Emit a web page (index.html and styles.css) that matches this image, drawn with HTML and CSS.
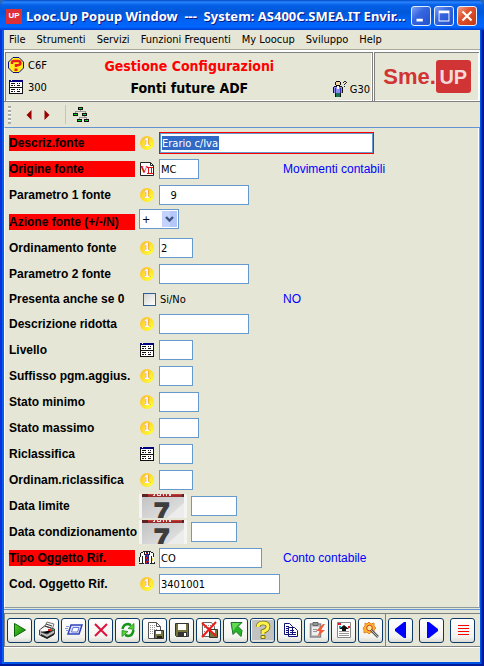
FILE: index.html
```html
<!DOCTYPE html>
<html lang="it">
<head>
<meta charset="utf-8">
<meta name="viewport" content="width=device-width, initial-scale=1">
<title>Looc.Up Popup Window</title>
<link rel="stylesheet" href="styles.css">
</head>
<body>
<svg class="sprite" aria-hidden="true">
  <defs>
    <linearGradient id="page" x1="0" y1="0" x2="1" y2="1"><stop offset="0" stop-color="#c2c2c2"/><stop offset="1" stop-color="#e6e6e6"/></linearGradient>
    <linearGradient id="leaf" x1="0" y1="0" x2="1" y2="1"><stop offset="0" stop-color="#5ccf2c"/><stop offset="1" stop-color="#067d06"/></linearGradient>
  </defs>
  <symbol id="table" viewBox="0 0 14 14">
    <g shape-rendering="crispEdges">
      <path fill="#111" d="M0 0h14v14H0z"/><path fill="#fff" d="M1 2h12v5H1zM1 8h12v5H1z"/><path fill="#000080" d="M0 0h14v2H0z"/><path fill="#fff" d="M2 0h1v1H2z"/>
      <path fill="#111" d="M2 3h4v1H2zM8 3h1v1H8zM10 3h1v1h-1zM2 5h2v1H2zM5 5h1v1H5zM8 5h3v1H8zM2 9h4v1H2zM8 9h1v1H8zM10 9h1v1h-1zM2 11h2v1H2zM5 11h1v1H5zM8 11h3v1H8z"/>
    </g>
  </symbol>
  <symbol id="calendar" viewBox="0 0 48 24">
    <path fill="#f4f4f2" d="M0 0h48v24H0z"/><path fill="url(#page)" d="M3 1h42v23H3z"/>
    <path fill="#ececec" d="M45 9v15H28z"/><path fill="#9c2b2b" d="M3 0h42v3H3z"/><path fill="#c53c3a" d="M8 0h35v1H8z"/><path fill="#5d2222" d="M3 0h6v3H3zM43 0h2v3h-2z"/>
    <path fill="#f1dddd" d="M15 0h1v2h-2V1h1zM18 0h1v1h2V0h1v2h-4zM24 0h1v2h-1zM27 0h1v2h-1zM30 0h2v2h-2z"/>
  </symbol>
</svg>

<div class="window">
  <header class="titlebar">
    <span class="app-badge">UP</span>
    <h1 class="titlebar-text">Looc.Up Popup Window&nbsp; ---&nbsp; System: AS400C.SMEA.IT Envir...</h1>
    <button class="caption-button" type="button" aria-label="Minimize"><svg viewBox="0 0 20 20"><path fill="#fff" d="M5 13h7v3H5z"/></svg></button>
    <button class="caption-button" type="button" aria-label="Maximize"><svg viewBox="0 0 20 20"><path fill="#fff" fill-rule="evenodd" d="M4 4h12v12H4zM5 7v8h10V7z"/></svg></button>
    <button class="caption-button caption-button--close" type="button" aria-label="Close"><svg viewBox="0 0 20 20"><path stroke="#fff" stroke-width="2.4" d="M5 5l10 10M15 5L5 15"/></svg></button>
  </header>

  <div class="client">
    <nav class="menu" aria-label="Menu">
      <button type="button">File</button><button type="button">Strumenti</button><button type="button">Servizi</button><button type="button">Funzioni Frequenti</button><button type="button">My Loocup</button><button type="button">Sviluppo</button><button type="button">Help</button>
    </nav>

    <section class="banner">
      <div class="banner-main">
        <div class="codes">
          <span class="code"><svg class="icon16" viewBox="0 0 16 16"><path fill="#ffec20" stroke="#10107a" d="M5 .5h6l4.5 4.5v6L11 15.500H5L.5 11V5z"/><path fill="none" stroke="#ef1c1c" stroke-width="2.4" d="M4 7V5.500Q4 4 6 4h4q2.500 0 2.500 2T9.500 8.300H8V10"/><path fill="#ef1c1c" d="M6.500 11.500h3V14h-3z"/></svg>C6F</span>
          <span class="code"><svg class="icon14"><use href="#table"/></svg>300</span>
        </div>
        <div class="headings">
          <h2 class="heading heading--red">Gestione Configurazioni</h2>
          <h2 class="heading">Fonti future ADF</h2>
        </div>
        <span class="code code--user"><svg class="icon16" viewBox="0 0 16 16" shape-rendering="crispEdges"><path fill="#111" d="M4 0h4v1H4zM3 1h1v3H3zM8 1h1v3H8zM4 4h4v1H4zM2 5h8v1H2zM1 6h1v6H1zM10 6h1v6h-1zM3 12h6v4H3z"/><path fill="#f7d3a0" d="M4 1h4v3H4z"/><path fill="#8d8df0" d="M2 6h8v6H2z"/><path fill="#3030a0" d="M3 7h1v5H3zM8 7h1v5H8z"/><path fill="#fff" d="M5 5h2v3H5z"/><path fill="#167052" d="M4 12h4v4H4z"/><path fill="#222" d="M12 0h2v1h-2zM11 1h1v1h-1zM14 1h1v1h-1zM13 2h1v1h-1zM12 3h1v1h-1zM12 5h1v1h-1z"/></svg>G30</span>
      </div>
      <div class="banner-logo"><span class="logo-sme">Sme.</span><span class="logo-up">UP</span></div>
    </section>

    <div class="navbar">
      <span class="grip"></span>
      <button type="button" aria-label="Precedente"><svg class="arrow" viewBox="0 0 6 10"><path fill="#990000" d="M5.500 0v10L.5 5z"/></svg></button>
      <button type="button" aria-label="Successivo"><svg class="arrow" viewBox="0 0 6 10"><path fill="#990000" d="M.5 0v10l5-5z"/></svg></button>
      <span class="divider"></span>
      <button type="button" aria-label="Struttura"><svg class="icon16" viewBox="0 0 16 16" shape-rendering="crispEdges"><path fill="#999" d="M7 3h1v2H7zM2 4h11v1H2zM2 4h1v3H2zM12 4h1v3h-1zM11 9h1v2h-1zM6 10h8v1H6zM6 10h1v3H6zM13 10h1v3h-1z"/><path fill="#111" d="M5 0h5v3H5zM0 6h5v3H0zM9 6h5v3H9zM4 12h5v3H4zM11 12h5v3h-5z"/><path fill="#00e020" d="M6 1h3v1H6zM1 7h3v1H1zM10 7h3v1h-3zM5 13h3v1H5zM12 13h3v1h-3z"/></svg></button>
    </div>

    <form class="fields">
      <div class="row"><label class="label label--required" for="f1">Descriz.fonte</label><span class="coin" aria-hidden="true">1</span><span class="focus-frame"><input id="f1" class="w-full" value="Erario c/Iva"></span></div>
      <div class="row"><label class="label label--required" for="f2">Origine fonte</label><svg class="icon-field" viewBox="0 0 14 14"><path fill="#fff" stroke="#222" d="M.5.5h10l3 3v10H.5z"/><path fill="none" stroke="#222" d="M10.500.5v3h3"/><text x="0" y="11" font-family="Liberation Serif" font-size="11" font-weight="bold" fill="#e01010">V</text><path fill="#e01010" d="M7 5h6v1H7zM8 6h1v5H8zM11 6h1v5h-1zM7 11h6v1H7z"/></svg><input id="f2" class="w-m" value="MC"><output class="hint">Movimenti contabili</output></div>
      <div class="row"><label class="label" for="f3">Parametro 1 fonte</label><span class="coin" aria-hidden="true">1</span><input id="f3" class="w-l" value="&nbsp;&nbsp; 9"></div>
      <div class="row row--select"><label class="label label--required" for="f4">Azione fonte (+/-/N)</label><span class="select"><select id="f4"><option>+</option><option>-</option><option>N</option></select><svg class="chevron" viewBox="0 0 15 16"><path fill="#c3d3fd" d="M0 0h15v16H0z"/><path fill="#b4c7f8" d="M8 0h7v16H8z"/><path fill="none" stroke="#3d5680" stroke-width="2.400" d="M4 6l3.500 3.500L11 6"/></svg></span></div>
      <div class="row"><label class="label" for="f5">Ordinamento fonte</label><span class="coin" aria-hidden="true">1</span><input id="f5" class="w-s" value="2"></div>
      <div class="row"><label class="label" for="f6">Parametro 2 fonte</label><span class="coin" aria-hidden="true">1</span><input id="f6" class="w-l"></div>
      <div class="row row--check"><span class="label">Presenta anche se 0</span><label class="check"><input type="checkbox">Si/No</label><output class="hint">NO</output></div>
      <div class="row"><label class="label" for="f8">Descrizione ridotta</label><span class="coin" aria-hidden="true">1</span><input id="f8" class="w-l"></div>
      <div class="row"><label class="label" for="f9">Livello</label><svg class="icon-field"><use href="#table"/></svg><input id="f9" class="w-s"></div>
      <div class="row"><label class="label" for="f10">Suffisso pgm.aggius.</label><span class="coin" aria-hidden="true">1</span><input id="f10" class="w-s"></div>
      <div class="row"><label class="label" for="f11">Stato minimo</label><span class="coin" aria-hidden="true">1</span><input id="f11" class="w-m"></div>
      <div class="row"><label class="label" for="f12">Stato massimo</label><span class="coin" aria-hidden="true">1</span><input id="f12" class="w-m"></div>
      <div class="row"><label class="label" for="f13">Riclassifica</label><svg class="icon-field"><use href="#table"/></svg><input id="f13" class="w-s"></div>
      <div class="row"><label class="label" for="f14">Ordinam.riclassifica</label><span class="coin" aria-hidden="true">1</span><input id="f14" class="w-s"></div>
      <div class="row"><label class="label" for="f15">Data limite</label><span class="date"><svg class="calendar" viewBox="0 0 48 24"><use href="#calendar"/><text x="15" y="28" font-family="Liberation Sans" font-size="28" font-weight="bold" fill="#3d3d3d" stroke="#3d3d3d" stroke-width="1.500">7</text></svg><input id="f15" class="w-date"></span></div>
      <div class="row"><label class="label" for="f16">Data condizionamento</label><span class="date"><svg class="calendar" viewBox="0 0 48 24"><use href="#calendar"/><text x="15" y="28" font-family="Liberation Sans" font-size="28" font-weight="bold" fill="#3d3d3d" stroke="#3d3d3d" stroke-width="1.500">7</text></svg><input id="f16" class="w-date"></span></div>
      <div class="row"><label class="label label--required" for="f17">Tipo Oggetto Rif.</label><svg class="icon16" viewBox="0 0 16 16" shape-rendering="crispEdges"><path fill="#222" d="M4 1h8v1H4zM2 2h2v1H2zM12 2h2v1h-2zM1 3h1v4H1zM14 3h1v4h-1zM0 7h1v6h16V7h-1v5H0zM0 13h5v1H0zM11 13h5v1h-5z"/><path fill="#fff" d="M4 2h8v1h2v4h1v6H1V7h1V3h2z"/><path fill="#222" d="M3 6h1v7H3zM12 6h1v7h-1zM5 2h1v3H5zM10 2h1v3h-1z"/><path fill="#23237e" d="M7 2h2v2h1v10H6V4h1z"/><path fill="#e02020" d="M7 3h1v1H7zM8 5h1v2H8zM7 7h1v2H7zM8 9h1v2H8zM7 11h1v2H7zM6 5h1v1H6zM9 11h1v1H9z"/><path fill="#ead84a" d="M13 8h1v3h-1z"/></svg><input id="f17" class="w-xl" value="CO"><output class="hint">Conto contabile</output></div>
      <div class="row"><label class="label" for="f18">Cod. Oggetto Rif.</label><span class="coin" aria-hidden="true">1</span><input id="f18" class="w-xxl" value="3401001"></div>
    </form>

    <footer class="actions">
      <div class="action-group">
        <button type="button" aria-label="Esegui"><svg viewBox="0 0 22 22"><path fill="url(#leaf)" stroke="#0a650a" d="M5.500 4.500v13l11-6.500z"/></svg></button>
        <button type="button" aria-label="Stampa"><svg viewBox="0 0 22 22"><path fill="#eee" stroke="#777" d="M8 9l3-6 7 2-2 6z"/><path fill="#bbb" stroke="#444" d="M3.500 11l5-4 10 3v5l-7 4-8-3z"/><path fill="#fff" d="M4 11l5-3 8 3-6 3z"/><path fill="#222" d="M5 15l6 3 7-4v2l-7 4-6-3z"/><path stroke="#444" d="M5 13l6 2 7-4M10 5l6 2M9 7l6 2"/><path fill="#e02020" d="M12 10h3v2h-3z"/><path fill="#17b040" d="M15 10h2v1h-2z"/></svg></button>
        <button type="button" aria-label="Nuovo"><svg viewBox="0 0 22 22"><path fill="#dfe5ff" stroke="#3344bb" stroke-width="1.500" d="M8 6h11l-3 9H5z"/><path fill="#fff" stroke="#6676d8" d="M10 8.500h6L14.500 13h-6z"/><path stroke="#8792d8" d="M3 7.500h3M2 9.500h3M3 11.500h2"/></svg></button>
        <button type="button" aria-label="Elimina"><svg viewBox="0 0 22 22"><path stroke="#dc143c" stroke-width="2" d="M5 5l12 12M17 5L5 17"/></svg></button>
        <button type="button" aria-label="Aggiorna"><svg viewBox="0 0 22 22"><path fill="none" stroke="#159515" stroke-width="2.500" d="M5.500 10q1-5 5.500-5l3 1M16.500 11q-1 6-5.500 6l-3-1"/><path fill="#54d52e" stroke="#14801c" stroke-width=".7" d="M11 9.500l6-5v6zM11 12.500l-6 5v-6z"/></svg></button>
        <button type="button" aria-label="Salva con nome"><svg viewBox="0 0 22 22"><path fill="#fff" stroke="#555" d="M4.500 3.500h8l4 4v12h-12z"/><path fill="none" stroke="#555" d="M12.500 3.500v4h4"/><path stroke="#999" stroke-dasharray="1 1" d="M6 6.500h5M6 8.500h5M6 10.500h7M6 12.500h4M6 14.500h4"/><path fill="#76763c" stroke="#333" d="M10.500 11.500h9v8h-9z"/><path fill="#fff" d="M12 12h5v3h-5z"/><path fill="#222" d="M13 17h5v2h-5z"/></svg></button>
        <button type="button" aria-label="Salva"><svg viewBox="0 0 22 22"><path fill="#74743c" stroke="#333" d="M4.500 4.500h13v13h-12l-1-1z"/><path fill="#fff" d="M7 5h8v6H7z"/><path fill="#333" d="M7 13h9v4H7z"/><path fill="#fff" d="M13 14h2v3h-2z"/></svg></button>
        <button type="button" aria-label="Elimina file"><svg viewBox="0 0 22 22"><path fill="#fff" stroke="#666" d="M4.500 3.500h9l3 4v10h-12z"/><path stroke="#888" stroke-dasharray="1 1" d="M6 6.500h7M6 8.500h7M6 12.500h4"/><path fill="#76763c" stroke="#333" d="M11.500 10.500h8v8h-8z"/><path fill="#fff" d="M13 11h4v3h-4z"/><path stroke="#f01818" stroke-width="2" d="M4 4l14 13M18 3L4 18"/></svg></button>
        <button type="button" aria-label="Collega"><svg viewBox="0 0 22 22"><path fill="#26b526" stroke="#23722c" d="M6 3.500h11l-4 4 4 4-1 6-5-5-3 3z"/><path fill="#65db54" d="M7 4h8l-4 4-3 4z"/></svg></button>
        <button type="button" aria-label="Aiuto"><svg viewBox="0 0 22 22"><path fill="#c2c2c2" d="M0 1h22v20H0z"/><path fill="none" stroke="#77701c" stroke-width="4.600" d="M6 8q0-4 5-4t5 3.500-5 5V15"/><path fill="none" stroke="#fff34a" stroke-width="3" d="M6 8q0-4 5-4t5 3.500-5 5V15"/><path fill="#fff34a" stroke="#77701c" d="M9 16.500h4v3H9z"/></svg></button>
        <button type="button" aria-label="Copia"><svg viewBox="0 0 22 22"><path fill="#fff" stroke="#10107a" d="M5.500 4.500h5l3 3v8h-8zM9.500 8.500h6l3 3v6h-9z"/><path stroke="#10107a" d="M7 7.500h3M7 9.500h2M7 11.500h2M7 13.500h2M11 11.500h4M11 13.500h6M11 15.500h6"/></svg></button>
        <button type="button" aria-label="Incolla"><svg viewBox="0 0 22 22"><path fill="#c8c8c8" stroke="#888" stroke-width="1.500" d="M4.500 5h10v13h-10z"/><path fill="#eee" d="M6 8h7v8H6z"/><path fill="#999" stroke="#666" d="M7 3.500h5v3H7z"/><path stroke="#999" d="M7 10.500h4M7 12.500h4"/><path fill="#f05a38" d="M17 5l-7 7h4l-3 6 8-7h-4l4-6z"/></svg></button>
        <button type="button" aria-label="Carica"><svg viewBox="0 0 22 22"><path fill="#fff" stroke="#888" d="M4.500 3.500h13v15h-13z"/><path stroke="#999" d="M6 12.500h10M6 14.500h10M6 16.500h10"/><path fill="#111" d="M11 6l5 4h-3v2H9v-2H6z"/><path fill="#e02020" d="M5 4h3v2H5zM15 7h2v2h-2z"/><path fill="#1aa0a0" d="M6 7h2v2H6z"/></svg></button>
        <button type="button" aria-label="Impostazioni"><svg viewBox="0 0 22 22"><path fill="#ffb52e" stroke="#e88728" d="M9 3l2 2 3-1v3l2 2-2 2v3l-3-1-2 2-2-2-3 1V11L3 9l2-2V4l2 1z"/><circle cx="9.500" cy="9" r="2.800" fill="#ffe995" stroke="#cf3a28"/><path stroke="#555" stroke-width="2.500" d="M11 11l7 7"/><path stroke="#bbb" d="M11 11l7 7"/></svg></button>
      </div>
      <div class="action-group action-group--paging">
        <button type="button" aria-label="Pagina precedente"><svg viewBox="0 0 22 22"><path fill="#0000ff" d="M16 3v16h-2L5 12v-2l9-7z"/></svg></button>
        <button type="button" aria-label="Pagina successiva"><svg viewBox="0 0 22 22"><path fill="#0000ff" d="M6 3v16h2l9-7v-2L8 3z"/></svg></button>
        <button type="button" aria-label="Elenco"><svg viewBox="0 0 22 22" shape-rendering="crispEdges"><path fill="#f00" d="M6 6h11v1H6zM6 9h11v1H6zM6 12h11v1H6zM6 15h11v1H6z"/></svg></button>
      </div>
    </footer>
    <div class="status"></div>
  </div>
</div>
</body>
</html>
```

FILE: styles.css
```css
* { box-sizing: border-box; }

body {
  margin: 0;
  background: #2c68b4;
  color: #000;
  font-family: "DejaVu Sans Condensed", "Noto Sans", sans-serif;
  font-size: 11px;
}

.sprite { position: absolute; width: 0; height: 0; }
svg { display: block; flex: none; }
h1, h2 { margin: 0; }
button { padding: 0; border: 0; background: none; font: inherit; color: inherit; }

.window {
  display: flex;
  flex-direction: column;
  min-height: 100vh;
  padding: 0 4px 4px;
  border-radius: 7px 7px 0 0;
  overflow: hidden;
  background: linear-gradient(to right, #0831d9 0 2px, #0a5cf0 2px 5px, #0054e3 5px calc(100% - 3px), #001a9c calc(100% - 2px));
  box-shadow: inset 0 -2px #001a9c;
}

.titlebar {
  display: flex;
  align-items: center;
  gap: 3px;
  height: 30px;
  margin: 0 -4px;
  padding: 2px 7px 0 6px;
  background: linear-gradient(#0048c4 0, #2a84ff 2px, #0560e8 5px, #0058d8 12px, #0062f4 20px, #0066ff 27px, #003dd0 30px);
}
.app-badge {
  width: 16px;
  height: 15px;
  background: #dc3036;
  color: #fff;
  font: bold 8px/14px "Liberation Sans", sans-serif;
  text-align: center;
}
.titlebar-text {
  flex: 1;
  min-width: 0;
  padding-left: 1px;
  color: #fff;
  font: bold 13px/18px "Noto Sans", sans-serif;
  white-space: nowrap;
  text-shadow: 1px 1px #0a1883;
}
.caption-button {
  flex: none;
  width: 20px;
  height: 20px;
  border: 1px solid #e4eeff;
  border-radius: 3px;
  background: linear-gradient(135deg, #7ba2f4, #3566e0 40%, #2450cc);
}
.caption-button svg { width: 18px; height: 18px; }
.caption-button--close { background: linear-gradient(135deg, #f0a184, #e0512c 40%, #c43a12); }

.client { display: flex; flex: 1; flex-direction: column; background: #e6e6d6; }

.menu {
  display: flex;
  gap: 11px;
  height: 20px;
  padding: 0 5px;
  border-bottom: 1px solid #aca899;
  line-height: 18px;
  white-space: nowrap;
}

.banner {
  display: flex;
  height: 52px;
  padding: 2px 1px 0;
  background: #fff;
  border-bottom: 1px solid #808080;
}
.banner-main, .banner-logo {
  display: flex;
  background: #e6e6d6;
  border: 1px solid #808080;
  border-width: 1px 0 0 1px;
  box-shadow: inset -1px -1px #fff;
}
.banner-main { flex: 1; padding: 3px 2px; border-right-width: 1px; }
.banner-logo { flex: none; align-items: center; justify-content: center; width: 105px; margin-left: 1px; padding-bottom: 2px; }
.codes { display: flex; flex-direction: column; gap: 4px; }
.code { display: flex; align-items: center; gap: 4px; height: 18px; }
.code--user { align-self: flex-end; gap: 2px; }
.icon16 { width: 16px; height: 16px; }
.icon14 { width: 14px; height: 14px; margin: 0 1px; }
.headings { flex: 1; display: flex; flex-direction: column; gap: 2px; text-align: center; }
.heading { font-size: 14px; line-height: 20px; }
.heading--red { color: #f00; }
.logo-sme { color: #d03434; font: bold 22px/33px "Liberation Sans", sans-serif; }
.logo-up {
  width: 35px;
  height: 33px;
  border-radius: 3px;
  background: #d03434;
  color: #f3dada;
  font: bold 20px/35px "Liberation Sans", sans-serif;
  text-align: center;
}

.navbar { display: flex; align-items: center; height: 25px; padding-left: 4px; }
.navbar button { margin-right: 12px; }
.grip { width: 3px; height: 18px; margin-right: 15px; background: repeating-linear-gradient(#aaa 0 2px, #fff 2px 3px, transparent 3px 4px); }
.arrow { width: 6px; height: 10px; }
.divider { width: 1px; height: 19px; margin: 0 7px 0 3px; background: #c5c99b; }

.fields {
  flex: 1;
  padding: 2px 3px 9px 4px;
  border: 1px solid #8f9a9c;
  border-top: 1px solid #6394cf;
  border-left-color: #fff;
  box-shadow: inset -1px 0 #fff;
}
.row { display: grid; grid-template-columns: 130px 20px 124px 1fr; align-items: center; height: 26px; }
.row--select { height: 27px; }
.row--check { height: 24px; }
.label { width: 126px; height: 16px; font: bold 12px/17px "Liberation Sans", sans-serif; white-space: nowrap; }
.label--required { background: #f00; }
.icon-field { width: 14px; height: 14px; margin-left: 1px; }
.coin {
  width: 14px;
  height: 14px;
  margin-left: 1px;
  border-radius: 50%;
  background: radial-gradient(circle at 75% 75%, #ffff30, #ffe02e 50%, #f8b12c);
  color: #fff;
  font: bold 10px/14px "Liberation Sans", sans-serif;
  text-align: center;
  text-shadow: 1px 0 #eca02c, -1px 0 #f2ad35;
}
.hint { grid-column: 4; color: #00f; font: 12px/16px "Liberation Sans", sans-serif; }

input:not([type="checkbox"]), select {
  height: 20px;
  padding: 0 1px;
  border: 1px solid #6699cc;
  border-radius: 0;
  outline: 0;
  background: #fff;
  color: #000;
  font: inherit;
}
.w-s { width: 34px; }
.w-m { width: 40px; }
.w-l { width: 90px; }
.w-xl { width: 103px; }
.w-xxl { width: 121px; }
.w-date { width: 46px; }
.w-full { width: 100%; }
.focus-frame { grid-column: 3 / -1; display: flex; width: 215px; border: 1px solid #f00; }
.focus-frame input:not([type="checkbox"]) {
  background: linear-gradient(#316ac5, #316ac5) 1px 2px / 57px 14px no-repeat, #fff;
  color: #fff;
}
.select { grid-column: 2 / -1; align-self: start; position: relative; width: 40px; height: 20px; margin-top: 1px; }
.select select { width: 100%; padding: 0 2px; appearance: none; }
.chevron { position: absolute; top: 2px; right: 2px; width: 15px; height: 16px; pointer-events: none; }
.check { grid-column: 2 / span 2; display: flex; align-items: center; gap: 4px; padding-left: 4px; }
.check input {
  appearance: none;
  width: 13px;
  height: 13px;
  margin: 0;
  border: 1px solid #2c5f98;
  background: linear-gradient(135deg, #d4d4d0, #fff);
}
.date { grid-column: 2 / -1; display: flex; align-items: center; gap: 4px; }
.calendar { width: 48px; height: 24px; overflow: hidden; }

.actions {
  display: flex;
  height: 39px;
  margin-top: 1px;
  padding-top: 3px;
  border-top: 1px solid #6394cf;
  border-bottom: 1px solid #fff;
}
.action-group {
  display: flex;
  align-items: center;
  gap: 2px;
  padding: 0 2px;
  border: 1px solid #808080;
  border-right: 0;
}
.action-group--paging { flex: 1; justify-content: space-between; padding-right: 5px; }
.actions button {
  display: grid;
  place-items: center;
  width: 25px;
  height: 25px;
  border: 1px solid #0b3a68;
  border-radius: 3px;
  background: linear-gradient(#fff, #f2f2ee 80%, #dcdad2);
}
.actions svg { width: 22px; height: 22px; }
.status { height: 14px; }
```
